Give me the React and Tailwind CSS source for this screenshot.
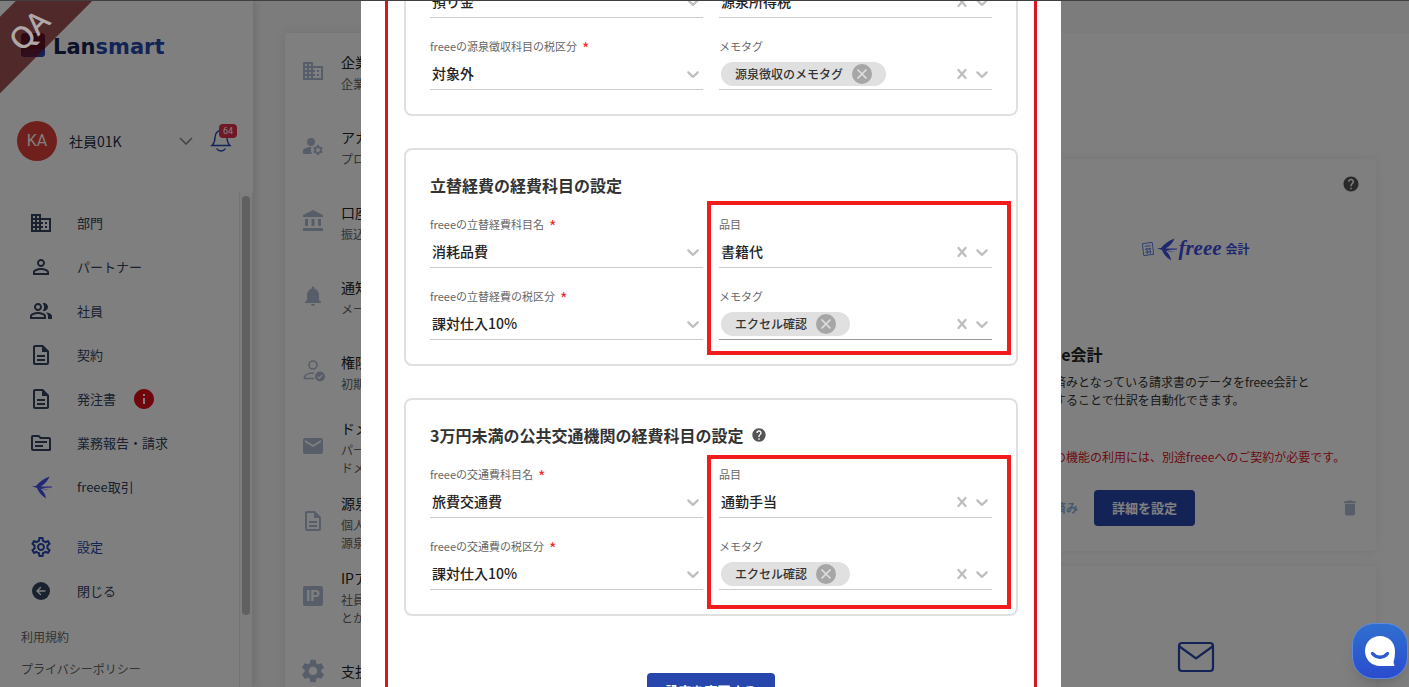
import React, { useId } from "react";
import {
  MdAccountBalance,
  MdBusiness,
  MdDelete,
  MdEmail,
  MdHelp,
  MdInfo,
  MdManageAccounts,
  MdNotifications,
  MdOutlineDescription,
  MdOutlinePeopleAlt,
  MdOutlineSettings,
  MdOutlineTopic,
  MdPersonOutline,
  MdSettings,
} from "react-icons/md";

const FreeeBird = ({ className }) => (
  <svg viewBox="0 0 24 24" className={className} fill="currentColor" aria-hidden="true">
    <path d="M20.500 1.500C14 4 9.500 8 7 11L3 11.200L8 13C9.500 17 12 20 17 23.500C16.500 19.500 14.500 16 11.500 13.800L21 15.200L12.500 13L23 12.500V11.600L11.500 11.400C16 9 19 5.500 20.500 1.500Z" />
  </svg>
);

const IpIcon = ({ className }) => (
  <span className={`flex items-center justify-center ${className}`}>
    <span className="flex h-5 w-5 items-center justify-center rounded-xs bg-[#b0bdd2] font-['Roboto',sans-serif] text-[15px] leading-5 font-bold text-white">
      IP
    </span>
  </span>
);

const PersonCheckIcon = ({ className }) => (
  <svg viewBox="0 0 24 24" className={className} fill="none" stroke="currentColor" strokeWidth="1.600" aria-hidden="true">
    <circle cx="12" cy="6" r="4" />
    <path d="M13 14C8 14 3.500 15.500 3.500 18.500V19.500H13" />
    <circle cx="19" cy="17.500" r="5" fill="currentColor" stroke="none" />
    <path d="M16.800 17.700L18.400 19.300L21.200 15.800" stroke="#fff" strokeWidth="1.300" />
  </svg>
);

const CloseMenuIcon = ({ className }) => (
  <svg viewBox="0 0 24 24" className={className} aria-hidden="true">
    <circle cx="12" cy="12" r="9" fill="currentColor" />
    <path d="M16 12H8.500M11.500 8.500L8 12L11.500 15.500" fill="none" stroke="#fff" strokeWidth="1.400" strokeLinecap="round" strokeLinejoin="round" />
  </svg>
);

const ChevronIcon = () => (
  <svg viewBox="0 0 20 20" className="h-5 w-5" fill="currentColor" aria-hidden="true">
    <path d="M4.516 7.548c0.436-0.446 1.043-0.481 1.576 0l3.908 3.747 3.908-3.747c0.533-0.481 1.141-0.446 1.574 0 0.436 0.445 0.408 1.197 0 1.615-0.406 0.418-4.695 4.502-4.695 4.502-0.217 0.223-0.502 0.335-0.787 0.335s-0.57-0.112-0.789-0.335c0 0-4.287-4.084-4.695-4.502s-0.436-1.17 0-1.615z" />
  </svg>
);

const CrossIcon = () => (
  <svg viewBox="0 0 20 20" className="h-5 w-5" fill="currentColor" aria-hidden="true">
    <path d="M14.348 14.849c-0.469 0.469-1.229 0.469-1.697 0l-2.651-3.030-2.651 3.029c-0.469 0.469-1.229 0.469-1.697 0-0.469-0.469-0.469-1.229 0-1.697l2.758-3.15-2.759-3.152c-0.469-0.469-0.469-1.228 0-1.697s1.228-0.469 1.697 0l2.652 3.031 2.651-3.031c0.469-0.469 1.228-0.469 1.697 0s0.469 1.229 0 1.697l-2.758 3.152 2.758 3.15c0.469 0.469 0.469 1.229 0 1.698z" />
  </svg>
);

const menuItems = [
  { name: "部門", icon: MdBusiness },
  { name: "パートナー", icon: MdPersonOutline },
  { name: "社員", icon: MdOutlinePeopleAlt },
  { name: "契約", icon: MdOutlineDescription },
  { name: "発注書", icon: MdOutlineDescription, alert: true },
  { name: "業務報告・請求", icon: MdOutlineTopic },
  { name: "freee取引", icon: FreeeBird, iconColor: "text-[#4452e8]" },
];

const settingItems = [
  { title: "企業情報", lines: ["企業情報の設定"], icon: MdBusiness },
  { title: "アカウント", lines: ["プロフィールの設定"], icon: MdManageAccounts },
  { title: "口座情報", lines: ["振込先の設定"], icon: MdAccountBalance },
  { title: "通知設定", lines: ["メール通知の設定"], icon: MdNotifications },
  { title: "権限設定", lines: ["初期権限の設定"], icon: PersonCheckIcon },
  { title: "ドメイン", lines: ["パートナーの", "ドメイン設定"], icon: MdEmail },
  { title: "源泉徴収", lines: ["個人への", "源泉徴収の設定"], icon: MdOutlineDescription },
  { title: "IPアドレス", lines: ["社員のアクセス", "とかの制限"], icon: IpIcon },
  { title: "支払設定", lines: [], icon: MdSettings, large: true },
];

const MenuLink = ({ item, color }) => {
  const Icon = item.icon;
  return (
    <a href="#" className={`flex h-11 items-center pl-[29px] text-[13px] ${color}`}>
      <Icon className={`h-6 w-6 ${item.iconColor || ""}`} />
      <span className="ml-6">{item.name}</span>
      {item.alert && <MdInfo className="ml-4 h-6 w-6 text-[#e20a18]" />}
    </a>
  );
};

const Sidebar = () => (
  <aside className="flex w-[253px] shrink-0 flex-col bg-white shadow-[2px_0_8px_rgba(0,0,0,0.12)]">
    {/* Logo */}
    <div className="flex h-[88px] items-center gap-2 pl-[21px]">
      <span className="flex h-6 w-6 flex-col justify-end overflow-hidden rounded-sm bg-[#1c2558]">
        <span className="h-2 rounded-tl-full bg-[#2847ad]" />
      </span>
      <span className="pt-1 font-['DejaVu_Sans',sans-serif] text-[21px] leading-6 font-bold text-[#182450]">
        Lan<span className="text-[#2847ad]">smart</span>
      </span>
    </div>

    {/* Account */}
    <div className="mt-8 flex h-10 items-center pl-[17px]">
      <span className="flex h-10 w-10 items-center justify-center rounded-full bg-[#e04038] font-['Roboto',sans-serif] text-base text-white">
        KA
      </span>
      <span className="ml-3 flex-1 text-sm text-[#26304a]">社員01K</span>
      <svg viewBox="0 0 14 8" className="h-2 w-3.5 text-[#888]" fill="none" stroke="currentColor" strokeWidth="1.600">
        <path d="M1 1L7 7L13 1" />
      </svg>
      <button type="button" aria-label="お知らせ" className="relative mr-5 ml-4 h-6 w-6 text-[#2847ad]">
        <svg viewBox="0 0 24 24" className="h-6 w-6" fill="none" stroke="currentColor" strokeWidth="1.400">
          <path d="M3 16.500H21C19 14.500 18 12 18 8.500C18 4.500 15.500 1.500 12 1.500C8.500 1.500 6 4.500 6 8.500C6 12 5 14.500 3 16.500Z" />
          <path d="M7.500 19.500C9.500 22.800 14.500 22.800 16.500 19.500" />
        </svg>
        <span className="absolute -top-[5px] left-2.5 rounded-sm bg-[#e0304c] px-1 font-['Roboto',sans-serif] text-[9px] leading-[14px] text-white">
          64
        </span>
      </button>
    </div>

    {/* Menu */}
    <div className="mt-8 flex flex-1">
      <nav className="flex flex-1 flex-col pt-2">
        {menuItems.map((item) => (
          <MenuLink key={item.name} item={item} color="text-[#34425f]" />
        ))}
        <div className="h-4" />
        <MenuLink item={{ name: "設定", icon: MdOutlineSettings }} color="text-[#2847ad]" />
        <MenuLink item={{ name: "閉じる", icon: CloseMenuIcon }} color="text-[#34425f]" />
        <div className="mt-2 flex flex-col pl-[21px] text-xs leading-8 text-[#666]">
          <a href="#">利用規約</a>
          <a href="#">プライバシーポリシー</a>
        </div>
      </nav>
      <div className="w-3.5 border-x border-[#e6e6e6] bg-[#fafafa] px-0.5 pt-[3px]">
        <div className="h-[419px] rounded-full bg-[#c1c1c1]" />
      </div>
    </div>
  </aside>
);

const SettingList = () => (
  <ul className="w-[400px] shrink-0 rounded-sm bg-white shadow-[0_0_12px_rgba(0,0,0,0.08)]">
    {settingItems.map(({ title, lines, icon: Icon, large }) => (
      <li key={title} className="flex h-[75px] items-center pl-4">
        <span className="flex w-6 justify-center">
          <Icon className={large ? "h-7 w-7 shrink-0 text-[#b0bdd2]" : "h-6 w-6 shrink-0 text-[#b0bdd2]"} />
        </span>
        <div className="ml-4">
          <p className="text-sm leading-[26px] text-[#222]">{title}</p>
          {lines.map((line) => (
            <p key={line} className="text-xs leading-[18px] text-[#666]">{line}</p>
          ))}
        </div>
      </li>
    ))}
  </ul>
);

const Integrations = () => (
  <section className="flex flex-1 flex-col items-end gap-[15px] bg-white pt-[126px] pr-[33px]">
    <article className="flex w-[360px] shrink-0 flex-col rounded-sm bg-white px-3.5 pt-4 pb-[25px] shadow-[0_0_12px_rgba(0,0,0,0.08)]">
      <MdHelp className="mr-0.5 h-[18px] w-[18px] self-end text-[#555]" />
      <div className="mt-8 flex h-12 items-center justify-center text-[#3c4fe0]">
        <svg viewBox="0 0 12 14" className="h-3.5 w-3 -rotate-6 text-[#5a80e8]" fill="none" stroke="currentColor">
          <rect x="1" y="1" width="10" height="12" rx="1" />
          <path d="M3 4H9M3 7H9M3 10H9M5 6V12M8 6V12" />
        </svg>
        <FreeeBird className="h-6 w-6" />
        <span className="font-['Liberation_Serif',serif] text-[21px] font-bold italic">freee</span>
        <span className="ml-1 text-xs font-bold">会計</span>
      </div>
      <h2 className="mt-[69px] text-base leading-6 font-bold text-[#222]">freee会計</h2>
      <p className="mt-[7px] text-xs leading-[18px] text-[#333]">
        承認済みとなっている請求書のデータをfreee会計と
        <br />
        連携することで仕訳を自動化できます。
      </p>
      <p className="mt-[39px] text-xs leading-[18px] text-[#dc1428]">
        ※この機能の利用には、別途freeeへのご契約が必要です。
      </p>
      <div className="mt-6 flex items-center">
        <span className="text-xs font-bold text-[#8eb4e0]">連携済み</span>
        <button type="button" className="ml-4 h-9 rounded-sm bg-[#2847ad] px-[18px] text-[13px] font-bold text-white">
          詳細を設定
        </button>
        <button type="button" aria-label="削除" className="mr-0.5 ml-auto text-[#b0bdd2]">
          <MdDelete className="h-5 w-5" />
        </button>
      </div>
    </article>
    <article className="flex h-[392px] w-[360px] shrink-0 justify-center rounded-sm bg-white pt-[75px] shadow-[0_0_12px_rgba(0,0,0,0.08)]">
      <svg viewBox="0 0 38 32" className="h-8 w-[38px] text-[#2847ad]" fill="none" stroke="currentColor" strokeWidth="2.200">
        <rect x="2" y="2" width="34" height="28" rx="3" />
        <path d="M2.500 5.500L19 17.500L35.500 5.500" />
      </svg>
    </article>
  </section>
);

const Field = ({ label, ariaLabel, value, tag, required, clearable, active }) => {
  const id = useId();
  return (
    <div>
      {label && (
        <label htmlFor={id} className="flex h-4 gap-[5px] text-[11px] leading-4 text-[#666]">
          {label}
          {required && <span className="text-base leading-5 text-[#f02828]">*</span>}
        </label>
      )}
      <div className={`flex h-9 items-center border-b pt-1 text-[#bfbfbf] ${active ? "border-[#999]" : "border-[#ccc]"}`}>
        {tag ? (
          <>
            <span className="ml-0.5 flex h-6 shrink-0 items-center gap-[9px] rounded-full bg-[#e0e0e0] px-3.5 text-xs font-medium text-[#333]">
              {tag}
              <button type="button" aria-label={`${tag}を削除`} className="flex h-5 w-5 items-center justify-center rounded-full bg-[#a6a6a6] text-[#e0e0e0]">
                <svg viewBox="0 0 20 20" className="h-5 w-5" fill="none" stroke="currentColor" strokeWidth="1.600">
                  <path d="M5.500 5.500L14.500 14.500M14.500 5.500L5.500 14.500" />
                </svg>
              </button>
            </span>
            <input id={id} type="text" aria-label={ariaLabel} className="min-w-0 flex-1 bg-transparent text-sm outline-none" />
          </>
        ) : (
          <select
            id={id}
            aria-label={ariaLabel}
            className="h-7 min-w-0 flex-1 appearance-none bg-transparent pb-0.5 pl-0.5 text-sm font-medium text-[#222] outline-none"
          >
            <option>{value}</option>
          </select>
        )}
        {clearable && (
          <button type="button" aria-label="クリア">
            <CrossIcon />
          </button>
        )}
        <ChevronIcon />
      </div>
    </div>
  );
};

const FieldGrid = ({ left, right, highlight }) => (
  <div className="grid grid-cols-2 gap-4">
    <div className="flex flex-col gap-5">
      {left.map((field, i) => (
        <Field key={i} {...field} />
      ))}
    </div>
    <div className="relative flex flex-col gap-5">
      {right.map((field, i) => (
        <Field key={i} {...field} clearable />
      ))}
      {highlight && <div className={`pointer-events-none absolute border-4 border-[#f21c1c] ${highlight}`} />}
    </div>
  </div>
);

const SettingDialog = () => (
  <div role="dialog" aria-label="経費科目の設定" className="w-full max-w-[700px] overflow-hidden bg-white px-6">
    <form className="border-x-3 border-[#dc141e] px-4 pb-16">
      {/* 源泉徴収 */}
      <section className="-mt-[19px] rounded-b-lg border-2 border-t-0 border-[#e0e0e0] px-6 pb-6">
        <FieldGrid
          left={[
            { ariaLabel: "源泉徴収科目名", value: "預り金" },
            { label: "freeeの源泉徴収科目の税区分", value: "対象外", required: true },
          ]}
          right={[
            { ariaLabel: "品目", value: "源泉所得税" },
            { label: "メモタグ", tag: "源泉徴収のメモタグ" },
          ]}
        />
      </section>

      {/* 立替経費 */}
      <section className="mt-8 rounded-lg border-2 border-[#e0e0e0] p-6">
        <h3 className="mb-5 text-base leading-[22px] font-bold text-[#333]">立替経費の経費科目の設定</h3>
        <FieldGrid
          left={[
            { label: "freeeの立替経費科目名", value: "消耗品費", required: true },
            { label: "freeeの立替経費の税区分", value: "課対仕入10%", required: true },
          ]}
          right={[
            { label: "品目", value: "書籍代" },
            { label: "メモタグ", tag: "エクセル確認", active: true },
          ]}
          highlight="-top-[15px] -right-[19px] -bottom-[15px] -left-3"
        />
      </section>

      {/* 公共交通機関 */}
      <section className="mt-8 rounded-lg border-2 border-[#e0e0e0] p-6">
        <h3 className="mb-5 flex items-center gap-2 text-base leading-[22px] font-bold text-[#333]">
          3万円未満の公共交通機関の経費科目の設定
          <MdHelp className="h-4 w-4 text-[#555]" />
        </h3>
        <FieldGrid
          left={[
            { label: "freeeの交通費科目名", value: "旅費交通費", required: true },
            { label: "freeeの交通費の税区分", value: "課対仕入10%", required: true },
          ]}
          right={[
            { label: "品目", value: "通勤手当" },
            { label: "メモタグ", tag: "エクセル確認" },
          ]}
          highlight="-top-[11px] -right-[19px] -bottom-[19px] -left-3"
        />
      </section>

      <div className="mt-[57px] flex justify-center">
        <button type="button" className="h-9 rounded-sm bg-[#2847ad] px-[18px] text-[13px] font-bold text-white">
          設定を変更する
        </button>
      </div>
    </form>
  </div>
);

const App = () => (
  <div className="flex h-screen flex-col overflow-hidden font-['Noto_Sans_CJK_JP',sans-serif]">
    <div className="h-px shrink-0 bg-[#404040]" />
    <div className="relative flex min-h-0 flex-1 overflow-hidden bg-[#f8f8f8]">
      <Sidebar />
      <main className="flex min-w-0 flex-1 items-start pt-8 pl-8">
        <SettingList />
        <Integrations />
      </main>

      <div className="absolute inset-0 flex items-start justify-center overflow-hidden bg-black/50 pl-[13px]">
        <SettingDialog />
      </div>

      {/* QA ribbon */}
      <div className="pointer-events-none absolute top-0 -left-[73px] flex h-[54px] w-[200px] -rotate-45 items-center justify-center bg-[#3c0606]/70 pt-1 font-['Noto_Sans',sans-serif] text-[30px] font-medium text-[#b0a8a8]">
        QA
      </div>

      <button
        type="button"
        aria-label="チャットを開く"
        className="absolute right-px bottom-2 flex h-14 w-14 items-center justify-center rounded-[22px] border border-[#5b8ae0] bg-linear-to-b from-[#2f6fd0] to-[#2b4bce] shadow-lg"
      >
        <svg viewBox="0 0 32 32" className="h-8 w-8" aria-hidden="true">
          <path d="M16 1C7.500 1 1 7.500 1 16S7.500 31 16 31H30.500L29.500 27C30.500 24 31 20 31 16C31 7.500 24.500 1 16 1Z" fill="#fff" />
          <path d="M8.500 18.500C12.500 23.500 19.500 23.500 23.500 18.500" fill="none" stroke="#2c5bcf" strokeWidth="3.400" strokeLinecap="round" />
        </svg>
      </button>
    </div>
  </div>
);

export default App;
